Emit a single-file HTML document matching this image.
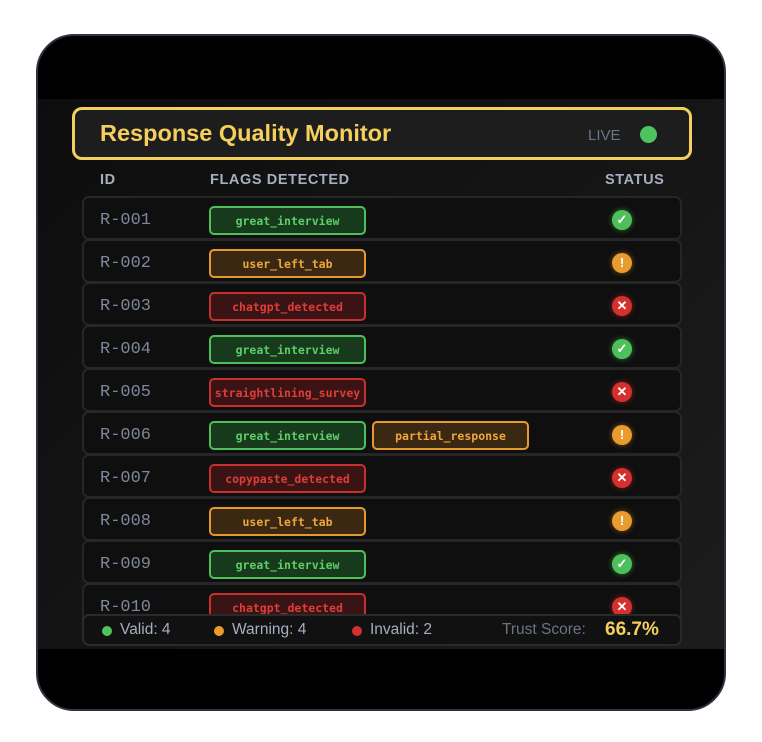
<!DOCTYPE html><html><head><style>
*{margin:0;padding:0;box-sizing:border-box}
body{width:762px;height:742px;background:#fff;position:relative;overflow:hidden;font-family:"Liberation Sans",sans-serif}
.frame{position:absolute;left:36px;top:34px;width:690px;height:677px;border-radius:38px;background:#000;border:2px solid #2b3440;overflow:hidden}
.panel{position:absolute;left:0;top:63px;width:686px;height:550px;background:linear-gradient(135deg,#0d0d0d,#1c1c1c)}
.hdr{position:absolute;left:34px;top:8px;width:620px;height:53px;border:3px solid #f4cf5d;border-radius:10px;background:#1d1d1d}
.hdr h1{position:absolute;left:25px;top:10px;font-size:23.5px;font-weight:bold;color:#f4cf5d}
.live{position:absolute;left:513px;top:17px;font-size:15px;color:#6b7386}
.dot{position:absolute;left:565px;top:16px;width:17px;height:17px;border-radius:50%;background:#4fc35e}
.ch{position:absolute;top:73px;font-size:14.5px;font-weight:bold;color:#a6afc0;letter-spacing:.6px}
.row{position:absolute;left:44px;width:600px;height:44px;border:2px solid #262626;border-radius:7px;background:#0f0f0f}
.id{position:absolute;left:16px;top:13px;font-family:"Liberation Mono",monospace;font-size:17px;color:#7d8799}
.tag{position:absolute;top:8px;width:157px;height:29px;border:2px solid;border-radius:5px;font-family:"DejaVu Sans Mono",monospace;font-weight:bold;font-size:11.5px;text-align:center;line-height:26px;white-space:nowrap;overflow:hidden}
.g{border-color:#4fbf5c;background:#173a1c;color:#5fcd69}
.o{border-color:#e69a2e;background:#3b2812;color:#efa63c}
.r{border-color:#c8302f;background:#3a1414;color:#df3d3a}
.st{position:absolute;left:528px;top:12px;width:20px;height:20px;border-radius:50%;color:#fff;font-size:13px;font-weight:bold;text-align:center;line-height:20px}
.sg{background:#4fbf5c;box-shadow:0 0 6px #2f7a37}.so{background:#e99b2d;box-shadow:0 0 6px #7a5218}.sr{background:#d3302e;box-shadow:0 0 6px #7a1f1e}
.foot{position:absolute;left:44px;top:515px;width:600px;height:32px;border:2px solid #2a2a2a;border-radius:7px;background:#111;font-size:15.5px;color:#a6afc0}
.foot span{position:absolute;top:5px}
.fd{position:absolute;top:10px;width:10px;height:10px;border-radius:50%}
</style></head><body>
<div class="frame"><div class="panel">
<div class="hdr"><h1>Response Quality Monitor</h1><div class="live">LIVE</div><div class="dot"></div></div>
<div class="ch" style="left:62px">ID</div><div class="ch" style="left:172px">FLAGS DETECTED</div><div class="ch" style="left:567px">STATUS</div>

<div class="row" style="top:97px"><div class="id">R-001</div><div class="tag g" style="left:125px">great_interview</div><div class="st sg">✓</div></div>
<div class="row" style="top:140px"><div class="id">R-002</div><div class="tag o" style="left:125px">user_left_tab</div><div class="st so">!</div></div>
<div class="row" style="top:183px"><div class="id">R-003</div><div class="tag r" style="left:125px">chatgpt_detected</div><div class="st sr">✕</div></div>
<div class="row" style="top:226px"><div class="id">R-004</div><div class="tag g" style="left:125px">great_interview</div><div class="st sg">✓</div></div>
<div class="row" style="top:269px"><div class="id">R-005</div><div class="tag r" style="left:125px">straightlining_survey</div><div class="st sr">✕</div></div>
<div class="row" style="top:312px"><div class="id">R-006</div><div class="tag g" style="left:125px">great_interview</div><div class="tag o" style="left:288px">partial_response</div><div class="st so">!</div></div>
<div class="row" style="top:355px"><div class="id">R-007</div><div class="tag r" style="left:125px">copypaste_detected</div><div class="st sr">✕</div></div>
<div class="row" style="top:398px"><div class="id">R-008</div><div class="tag o" style="left:125px">user_left_tab</div><div class="st so">!</div></div>
<div class="row" style="top:441px"><div class="id">R-009</div><div class="tag g" style="left:125px">great_interview</div><div class="st sg">✓</div></div>
<div class="row" style="top:484px"><div class="id">R-010</div><div class="tag r" style="left:125px">chatgpt_detected</div><div class="st sr">✕</div></div>

<div class="foot">
<div class="fd" style="left:18px;background:#4fc35e"></div><span style="left:36px">Valid: 4</span>
<div class="fd" style="left:130px;background:#e99b2d"></div><span style="left:148px">Warning: 4</span>
<div class="fd" style="left:268px;background:#d3302e"></div><span style="left:286px">Invalid: 2</span>
<span style="left:418px;color:#6b7386">Trust Score:</span>
<span style="left:521px;top:3px;font-size:19px;font-weight:bold;color:#f4cf5d">66.7%</span>
</div>
</div></div>
</body></html>
